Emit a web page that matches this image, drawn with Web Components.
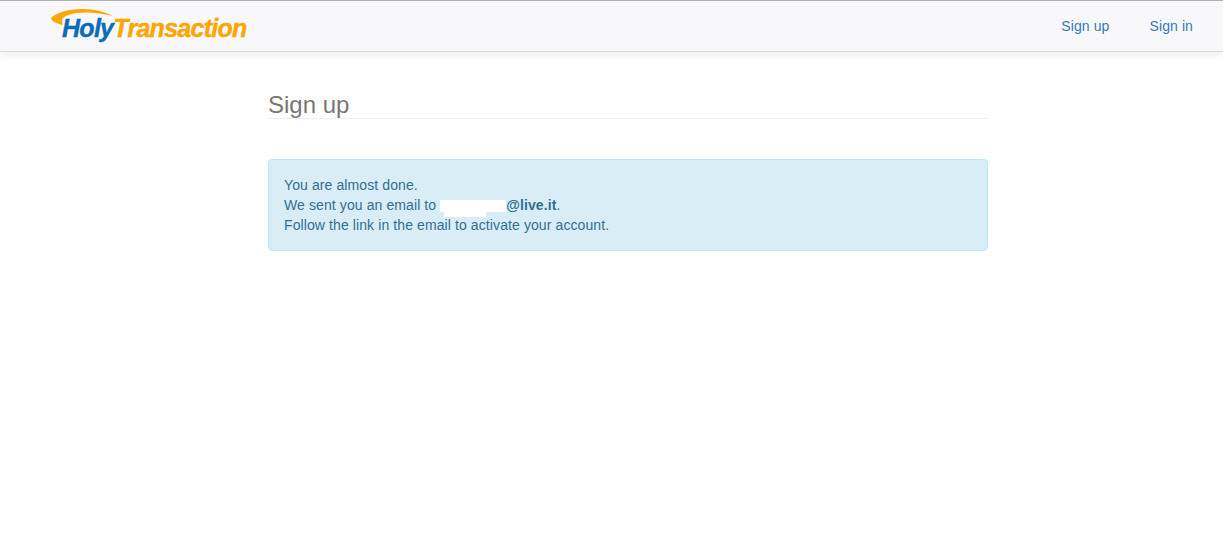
<!DOCTYPE html>
<html>
<head>
<meta charset="utf-8">
<title>Sign up</title>
<style>
  html, body { margin: 0; padding: 0; background: #fff; }
  body { font-family: "Liberation Sans", Arial, sans-serif; font-size: 14px; color: #333; }
</style>
</head>
<body>
<site-header>
  <site-logo slot="logo"></site-logo>
  <nav-link href="#">Sign up</nav-link>
  <nav-link href="#">Sign in</nav-link>
</site-header>
<page-body>
  <page-title>Sign up</page-title>
  <info-alert>
    <div>You are almost done.</div>
    <div>We sent you an email to <hidden-mail></hidden-mail><b>@live.it</b>.</div>
    <div>Follow the link in the email to activate your account.</div>
  </info-alert>
</page-body>

<script>
class SiteHeader extends HTMLElement {
  constructor() {
    super();
    this.attachShadow({ mode: "open" });
    this.shadowRoot.innerHTML = `
      <style>
        :host{display:flex;align-items:center;justify-content:space-between;box-sizing:border-box;height:52px;background:#f8f8fa;border-top:1px solid #b0b0b0;border-bottom:1px solid #dcdcdc;box-shadow:0 3px 8px rgba(0,0,0,.07);padding:0 30px 0 51px}
        .links{display:flex;gap:40px}
      </style>
      <slot name="logo"></slot>
      <div class="links"><slot></slot></div>
    `;
  }
}
customElements.define("site-header", SiteHeader);

class SiteLogo extends HTMLElement {
  constructor() {
    super();
    this.attachShadow({ mode: "open" });
    this.shadowRoot.innerHTML = `
      <style>
        :host{display:block;position:relative;width:196px;height:32px;margin-top:-2px}
        svg{position:absolute;left:0;top:0}
        .word{position:absolute;left:11px;top:5px;font:italic bold 25px/28px "Liberation Sans",Arial,sans-serif;letter-spacing:-.72px;-webkit-text-stroke:.4px currentColor;white-space:nowrap;color:#fea500}
        .holy{color:#0a6db5}
      </style>
      <svg width="64" height="18" viewBox="0 0 64 18" aria-hidden="true">
        <path d="M0 9C5 4 16 0 32 0 44 0 54 3 62 7 52 5 44 3.5 35 3.5 22 3.5 11 7 11 11 11 13 12 15 11 16 5 14 0 12 0 9Z" fill="#fea500"/>
      </svg>
      <span class="word"><span class="holy">Holy</span>Transaction</span>
    `;
  }
}
customElements.define("site-logo", SiteLogo);

class NavLink extends HTMLElement {
  constructor() {
    super();
    this.attachShadow({ mode: "open" });
    this.shadowRoot.innerHTML = `
      <style>
        :host{display:block;font-size:14px;line-height:20px;letter-spacing:.1px}
        a{color:#337ab7;text-decoration:none}
      </style>
      <a part="link"><slot></slot></a>
    `;
  }
  connectedCallback() {
    this.shadowRoot.querySelector("a").href = this.getAttribute("href") || "#";
  }
}
customElements.define("nav-link", NavLink);

class PageBody extends HTMLElement {
  constructor() {
    super();
    this.attachShadow({ mode: "open" });
    this.shadowRoot.innerHTML = `
      <style>
        :host{display:block;box-sizing:border-box;width:720px;margin:0 0 0 268px;padding-top:40px}
      </style>
      <slot></slot>
    `;
  }
}
customElements.define("page-body", PageBody);

class PageTitle extends HTMLElement {
  constructor() {
    super();
    this.attachShadow({ mode: "open" });
    this.shadowRoot.innerHTML = `
      <style>
        :host{display:block;border-bottom:1px solid #eee;font-size:24px;line-height:26px;color:#777;padding-bottom:0;margin-bottom:40px}
      </style>
      <slot></slot>
    `;
  }
}
customElements.define("page-title", PageTitle);

class InfoAlert extends HTMLElement {
  constructor() {
    super();
    this.attachShadow({ mode: "open" });
    this.shadowRoot.innerHTML = `
      <style>
        :host{display:block;box-sizing:border-box;background:#d9edf7;border:1px solid #bce8f1;border-radius:4px;color:#31708f;padding:15px;font-size:14px;line-height:20px;letter-spacing:.1px}
      </style>
      <slot></slot>
    `;
  }
}
customElements.define("info-alert", InfoAlert);

// the address in the reference is painted out with white
class HiddenMail extends HTMLElement {
  constructor() {
    super();
    this.attachShadow({ mode: "open" });
    this.shadowRoot.innerHTML = `
      <style>
        :host{display:inline-block;position:relative;width:66px;height:12px;vertical-align:-2px;background:#fff}
        i{position:absolute;left:4px;top:12px;width:42px;height:5px;background:#fff}
      </style>
      <i></i>
    `;
  }
}
customElements.define("hidden-mail", HiddenMail);
</script>
</body>
</html>
